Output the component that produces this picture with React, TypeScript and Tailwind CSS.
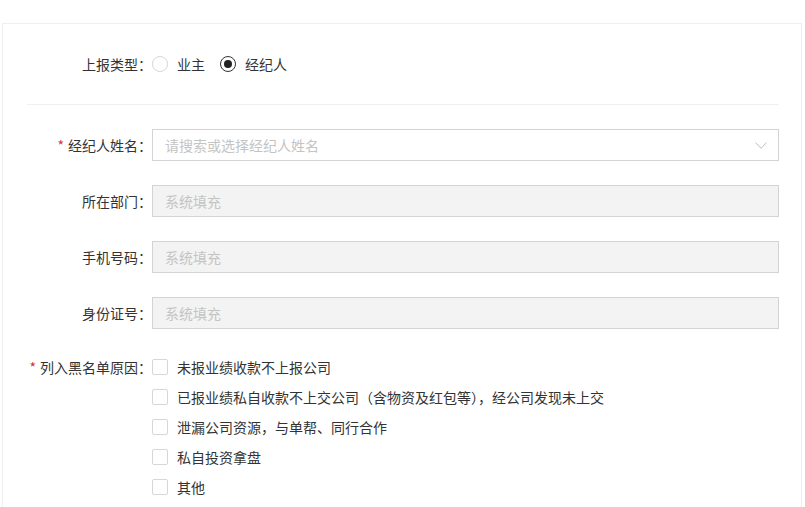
const font = { fontFamily: '"Noto Sans CJK SC", "Noto Sans", sans-serif' };

const reasons = [
  '未报业绩收款不上报公司',
  '已报业绩私自收款不上交公司（含物资及红包等），经公司发现未上交',
  '泄漏公司资源，与单帮、同行合作',
  '私自投资拿盘',
  '其他',
];

function Label({ text, required }: { text: string; required?: boolean }) {
  return (
    <div className="w-[149px] shrink-0 text-right text-[14px] text-[#333]">
      {required && <span className="mr-[4px] text-[#c8373b]">*</span>}
      {text}：
    </div>
  );
}

function Radio({ checked, label }: { checked?: boolean; label: string }) {
  return (
    <label className="flex items-center gap-[9px]">
      <span
        className={
          checked
            ? 'flex h-[16px] w-[16px] items-center justify-center rounded-full border border-[#333]'
            : 'h-[16px] w-[16px] rounded-full border border-[#d6d6d6]'
        }
      >
        {checked && <span className="h-[8px] w-[8px] rounded-full bg-[#222]" />}
      </span>
      <span className="text-[14px] text-[#333]">{label}</span>
    </label>
  );
}

function Field({ label, required, placeholder, select }: { label: string; required?: boolean; placeholder: string; select?: boolean }) {
  return (
    <div className="flex items-center">
      <Label text={label} required={required} />
      <div
        className={
          select
            ? 'flex h-[32px] flex-1 items-center justify-between border border-[#d4d4d4] bg-white pl-[12px] pr-[11px]'
            : 'flex h-[32px] flex-1 items-center border border-[#d4d4d4] bg-[#f3f3f3] pl-[12px]'
        }
      >
        <span className="text-[14px] text-[#c4c4c4]">{placeholder}</span>
        {select && (
          <svg width="12" height="7" viewBox="0 0 12 7" fill="none">
            <path d="M0.5 0.6 L6 6.3 L11.5 0.6" stroke="#bdbdbd" strokeWidth="1" />
          </svg>
        )}
      </div>
    </div>
  );
}

export default function App() {
  return (
    <main className="min-h-screen bg-white pt-[23px] pl-[2px]" style={font}>
      <div className="w-[800px] border border-[#efefef] pr-[22px] pb-[20px]">
        {/* ===== 上报类型 ===== */}
        <div className="mt-[24px] flex h-[32px] items-center">
          <Label text="上报类型" />
          <div className="flex items-center gap-[15px]">
            <Radio label="业主" />
            <Radio label="经纪人" checked />
          </div>
        </div>

        <div className="ml-[24px] mt-[24px] h-px bg-[#f0f0f0]" />

        {/* ===== 经纪人信息 ===== */}
        <div className="mt-[24px] flex flex-col gap-[24px]">
          <Field label="经纪人姓名" required placeholder="请搜索或选择经纪人姓名" select />
          <Field label="所在部门" placeholder="系统填充" />
          <Field label="手机号码" placeholder="系统填充" />
          <Field label="身份证号" placeholder="系统填充" />
        </div>

        {/* ===== 列入黑名单原因 ===== */}
        <div className="mt-[23px] flex items-start">
          <div className="flex h-[30px] items-center">
            <Label text="列入黑名单原因" required />
          </div>
          <div className="flex flex-col">
            {reasons.map((r) => (
              <label key={r} className="flex h-[30px] items-center gap-[9px]">
                <span className="h-[16px] w-[16px] rounded-[2px] border border-[#d6d6d6] bg-white" />
                <span className="text-[14px] text-[#333]">{r}</span>
              </label>
            ))}
          </div>
        </div>
      </div>
    </main>
  );
}
